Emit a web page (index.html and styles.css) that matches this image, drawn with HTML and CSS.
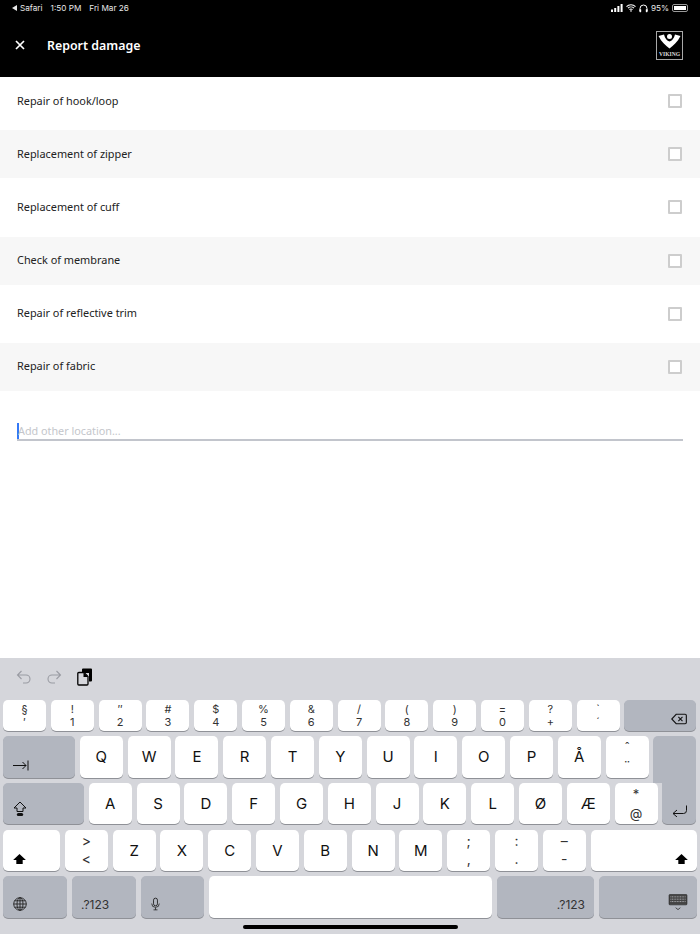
FILE: index.html
```html
<!DOCTYPE html>
<html lang="en">
<head>
    <meta charset="UTF-8">
    <meta name="viewport" content="width=device-width, initial-scale=1">
    <title>Report damage</title>
    <link rel="stylesheet" href="styles.css">
</head>
<body>
    <header class="app-header">
        <div class="status-bar">
            <div class="status-left">
                <span class="back-arrow"></span><span>Safari</span><span class="status-time">1:50 PM</span><span class="status-date">Fri Mar 26</span>
            </div>
            <div class="status-right">
                <svg class="ic-signal" width="12" height="8" viewBox="0 0 12 8"><path d="M0 5.500h2V8H0zM3.200 4h2v4h-2zM6.400 2h2v6h-2zM9.600 0h2v8h-2z" fill="#fff"/></svg>
                <svg width="10" height="8" viewBox="0 0 10 8"><path d="M.5 2.600a6.400 6.400 0 0 1 9 0M2 4.200a4.300 4.300 0 0 1 6 0M3.500 5.700a2.200 2.200 0 0 1 3 0" fill="none" stroke="#fff" stroke-width="1.100"/><path d="M5 8 3.900 6.800a1.600 1.600 0 0 1 2.200 0z" fill="#fff"/></svg>
                <svg width="9" height="9" viewBox="0 0 9 9"><path d="M1 7V4.500a3.500 3.500 0 0 1 7 0V7" fill="none" stroke="#fff" stroke-width="1"/><rect x=".4" y="5.200" width="1.800" height="3" rx=".6" fill="#fff"/><rect x="6.800" y="5.200" width="1.800" height="3" rx=".6" fill="#fff"/></svg>
                <span class="status-pct">95%</span>
                <span class="battery"><span class="battery-fill"></span></span>
            </div>
        </div>
        <div class="nav-bar">
            <svg class="close-icon" width="10" height="10" viewBox="0 0 10 10"><path d="M1 1l8 8M9 1l-8 8" stroke="#fff" stroke-width="1.700" fill="none"/></svg>
            <h1 class="nav-title">Report damage</h1>
            <svg class="logo" width="27" height="29" viewBox="0 0 27 29">
                <rect x=".5" y=".5" width="26" height="28" fill="#000" stroke="#a8a8a8"/>
                <path d="M2.500 5 8 3.500C9 7.500 11 10 13.500 10.500 16 10 18 7.500 19 3.500L24.500 5C21.500 11 17 15 13.500 17.500 10 15 5.500 11 2.500 5z" fill="#fff"/>
                <circle cx="13.500" cy="5.500" r="2.500" fill="#fff"/>
                <text x="13.500" y="24.500" class="logo-text" text-anchor="middle">VIKING</text>
            </svg>
        </div>
    </header>

    <main class="content">
        <div class="check-row"><span>Repair of hook/loop</span><span class="checkbox"></span></div>
        <div class="check-row alt"><span>Replacement of zipper</span><span class="checkbox"></span></div>
        <div class="check-row"><span>Replacement of cuff</span><span class="checkbox"></span></div>
        <div class="check-row alt"><span>Check of membrane</span><span class="checkbox"></span></div>
        <div class="check-row"><span>Repair of reflective trim</span><span class="checkbox"></span></div>
        <div class="check-row alt"><span>Repair of fabric</span><span class="checkbox"></span></div>
        <div class="other-field"><span class="caret"></span><span class="placeholder">Add other location...</span></div>
    </main>

    <section class="keyboard">
        <div class="kb-tools">
            <svg width="16" height="14" viewBox="0 0 16 14"><path d="M5.500 1 1.500 5l4 4M1.500 5H10a4 4 0 0 1 0 8H7" fill="none" stroke="#9a9ca3" stroke-width="1.100"/></svg>
            <svg width="16" height="14" viewBox="0 0 16 14"><path d="M10.500 1l4 4-4 4M14.500 5H6a4 4 0 0 0 0 8h3" fill="none" stroke="#9a9ca3" stroke-width="1.100"/></svg>
            <svg class="paste-icon" width="16" height="18" viewBox="0 0 16 18"><path d="M5 1.500A1 1 0 0 1 6 .5h8a1 1 0 0 1 1 1v11a1 1 0 0 1-1 1H12V5H5z" fill="#000"/><path d="M1.800 4.500H7l4 4v7.500a1 1 0 0 1-1 1H1.800a1 1 0 0 1-1-1v-10.500a1 1 0 0 1 1-1z" fill="#d5d6db" stroke="#000" stroke-width="1.300"/><path d="M6.500 4.500v4.500H11z" fill="#000"/></svg>
        </div>
        <div class="kb-row row-num">
            <div class="key dbl"><span>§</span><span>′</span></div>
            <div class="key dbl"><span>!</span><span>1</span></div>
            <div class="key dbl"><span>″</span><span>2</span></div>
            <div class="key dbl"><span>#</span><span>3</span></div>
            <div class="key dbl"><span>$</span><span>4</span></div>
            <div class="key dbl"><span>%</span><span>5</span></div>
            <div class="key dbl"><span>&amp;</span><span>6</span></div>
            <div class="key dbl"><span>/</span><span>7</span></div>
            <div class="key dbl"><span>(</span><span>8</span></div>
            <div class="key dbl"><span>)</span><span>9</span></div>
            <div class="key dbl"><span>=</span><span>0</span></div>
            <div class="key dbl"><span>?</span><span>+</span></div>
            <div class="key dbl"><span>`</span><span>´</span></div>
            <div class="key dark w-back end icon-mid">
                <svg width="16" height="12" viewBox="0 0 17 12"><path d="M5.500 1H15a1.300 1.300 0 0 1 1.300 1.300v7.400A1.300 1.300 0 0 1 15 11H5.500L.8 6z" fill="none" stroke="#111" stroke-width="1.200"/><path d="M7.800 3.800l4.400 4.400M12.200 3.800 7.800 8.200" stroke="#111" stroke-width="1.200"/></svg>
            </div>
        </div>
        <div class="kb-row">
            <div class="key dark w-tab start">
                <svg width="16" height="11" viewBox="0 0 16 11"><path d="M0 5.500h13M9.500 2l3.500 3.500L9.500 9M15 .5v10" fill="none" stroke="#111" stroke-width="1"/></svg>
            </div>
            <div class="key">Q</div><div class="key">W</div><div class="key">E</div><div class="key">R</div>
            <div class="key">T</div><div class="key">Y</div><div class="key">U</div><div class="key">I</div>
            <div class="key">O</div><div class="key">P</div><div class="key">Å</div>
            <div class="key dbl tall"><span>ˆ</span><span>¨</span></div>
            <div class="key dark return-top"></div>
        </div>
        <div class="kb-row">
            <div class="key dark w-caps start">
                <svg width="14" height="16" viewBox="0 0 14 16"><path d="M7 1 1 7h3v3.500h6V7h3z" fill="none" stroke="#111" stroke-width="1"/><rect x="3.800" y="12" width="6.400" height="3" rx="1.500" fill="#111"/></svg>
            </div>
            <div class="key">A</div><div class="key">S</div><div class="key">D</div><div class="key">F</div>
            <div class="key">G</div><div class="key">H</div><div class="key">J</div><div class="key">K</div>
            <div class="key">L</div><div class="key">Ø</div><div class="key">Æ</div>
            <div class="key dbl tall"><span>*</span><span>@</span></div>
            <div class="key dark return-bottom end">
                <svg width="15" height="12" viewBox="0 0 15 12"><path d="M14.500 .5v5a3 3 0 0 1-3 3H1M5 5 1 8.500 5 12" fill="none" stroke="#111" stroke-width="1"/></svg>
            </div>
        </div>
        <div class="kb-row">
            <div class="key w-shift start">
                <svg width="13" height="10" viewBox="0 0 14 11"><path d="M7 0 0 6.500h3.500V11h7V6.500H14z" fill="#000"/></svg>
            </div>
            <div class="key dbl wide-dbl"><span>&gt;</span><span>&lt;</span></div>
            <div class="key">Z</div><div class="key">X</div><div class="key">C</div><div class="key">V</div>
            <div class="key">B</div><div class="key">N</div><div class="key">M</div>
            <div class="key dbl wide-dbl"><span>;</span><span>,</span></div>
            <div class="key dbl wide-dbl"><span>:</span><span>.</span></div>
            <div class="key dbl wide-dbl"><span>–</span><span>-</span></div>
            <div class="key w-shift-r end">
                <svg width="13" height="10" viewBox="0 0 14 11"><path d="M7 0 0 6.500h3.500V11h7V6.500H14z" fill="#000"/></svg>
            </div>
        </div>
        <div class="kb-row row-bottom">
            <div class="key dark w-globe start">
                <svg width="14" height="14" viewBox="0 0 14 14"><g fill="none" stroke="#222" stroke-width=".9"><circle cx="7" cy="7" r="6.300"/><ellipse cx="7" cy="7" rx="3" ry="6.300"/><path d="M7 .7v12.600M.7 7h12.600M1.500 3.800h11M1.500 10.200h11"/></g></svg>
            </div>
            <div class="key dark w-123 start label">.?123</div>
            <div class="key dark w-mic start">
                <svg width="9" height="14" viewBox="0 0 10 14"><rect x="2.800" y=".5" width="4.400" height="8.500" rx="2.200" fill="none" stroke="#222" stroke-width="1"/><path d="M.8 6.500a4.200 4.200 0 0 0 8.400 0M5 11v2.500M2.800 13.500h4.400" fill="none" stroke="#222" stroke-width=".9"/></svg>
            </div>
            <div class="key w-space"></div>
            <div class="key dark w-123r end label">.?123</div>
            <div class="key dark w-hide end">
                <svg width="20" height="17" viewBox="0 0 20 18"><rect x=".5" y=".5" width="19" height="11" rx="1" fill="#444" stroke="#222" stroke-width=".6"/><path d="M2 3h16M2 5.500h16M2 8h16" stroke="#c8cad0" stroke-width=".8" stroke-dasharray="1 .7"/><path d="M7.500 14.500 10 16.500l2.500-2" fill="none" stroke="#222" stroke-width=".8"/></svg>
            </div>
        </div>
        <div class="home-bar"></div>
    </section>
</body>
</html>
```

FILE: styles.css
```css
* {
    box-sizing: border-box;
}
body {
    margin: 0;
    height: 934px;
    overflow: hidden;
    font-family: 'Noto Sans', 'Open Sans', sans-serif;
    background: #fff;
    color: #222;
    display: flex;
    flex-direction: column;
}

/* header */
.app-header {
    background: #000;
    color: #fff;
    height: 77px;
    flex: none;
}
.status-bar {
    height: 16px;
    padding: 0 12px;
    display: flex;
    align-items: center;
    justify-content: space-between;
    font-family: Inter, 'Liberation Sans', sans-serif;
    font-size: 8.2px;
    color: #e8e8e8;
}
.status-left {
    display: flex;
    align-items: center;
    gap: 3px;
}
.back-arrow {
    width: 0;
    height: 0;
    border: 3px solid transparent;
    border-left: 0;
    border-right: 5px solid #e8e8e8;
}
.status-time,
.status-date {
    margin-left: 5px;
}
.status-right {
    display: flex;
    align-items: center;
    gap: 3px;
}
.battery {
    width: 16px;
    height: 8px;
    border: 1px solid #999;
    border-radius: 2px;
    padding: 1px;
    display: flex;
}
.battery-fill {
    flex: 1;
    background: #fff;
}
.nav-bar {
    height: 61px;
    padding: 0 17px 3px 15px;
    display: flex;
    align-items: center;
}
.close-icon {
    margin-right: 22px;
}
.nav-title {
    flex: 1;
    margin: 0;
    font-size: 12.4px;
    font-weight: 600;
}
.logo-text {
    font-family: 'Liberation Serif', serif;
    font-size: 5.6px;
    font-weight: bold;
    fill: #ddd;
}

/* list */
.content {
    flex: 1;
    display: flex;
    flex-direction: column;
    gap: 5.2px;
}
.check-row {
    height: 48px;
    padding: 0 18px 2px 17px;
    display: flex;
    align-items: center;
    justify-content: space-between;
    font-size: 10.9px;
    color: #222;
}
.check-row.alt {
    background: #f7f7f7;
}
.checkbox {
    width: 14px;
    height: 14px;
    margin-top: 2px;
    border: 2px solid #cdcdcd;
    border-radius: 1px;
    background: #fff;
}
.other-field {
    margin: 22px 17px 0;
    height: 23px;
    padding-bottom: 1px;
    border-bottom: 2px solid #c2c5cc;
    display: flex;
    align-items: flex-end;
    font-size: 10.8px;
    color: #c4c6cb;
}
.caret {
    width: 2px;
    height: 16px;
    margin-bottom: -1px;
    background: #3478f6;
    margin-right: -1px;
}

/* keyboard */
.keyboard {
    flex: none;
    height: 276px;
    background: #d5d6db;
    display: flex;
    flex-direction: column;
    font-family: Inter, 'Liberation Sans', sans-serif;
    color: #111;
}
.kb-tools {
    height: 42px;
    padding: 0 0 4px 16px;
    display: flex;
    align-items: center;
    gap: 14px;
}
.paste-icon {
    margin-left: 1px;
}
.kb-row {
    height: 41.5px;
    margin-bottom: 5.2px;
    padding: 0 3px;
    display: flex;
    gap: 4.8px;
}
.row-num {
    height: 31px;
}
.row-bottom {
    gap: 5px;
}
.key {
    width: 43px;
    flex: none;
    background: #fff;
    border-radius: 5px;
    box-shadow: 0 1px 0 #8f9197;
    display: flex;
    align-items: center;
    justify-content: center;
    font-size: 15px;
}
.key.dark {
    background: #b2b6bf;
}
.key.dbl {
    flex-direction: column;
    justify-content: center;
    font-size: 11px;
    line-height: 13px;
    color: #333;
}
.key.tall {
    font-size: 13px;
    line-height: 19px;
}
.key.wide-dbl {
    font-size: 14px;
    line-height: 18px;
}
.key.start {
    justify-content: flex-start;
    align-items: flex-end;
    padding: 0 0 7px 10px;
}
.key.end {
    justify-content: flex-end;
    align-items: flex-end;
    padding: 0 9px 7px 0;
}
.key.icon-mid {
    padding-bottom: 6px;
}
.w-back { width: 72px; }
.w-tab { width: 72px; }
.w-caps { width: 81px; }
.w-shift { width: 57px; }
.w-shift-r { width: 106px; }
.w-globe { width: 64px; }
.w-123 { width: 63.5px; }
.w-mic { width: 63.5px; }
.w-space { width: 283px; }
.w-123r { width: 97px; }
.w-hide { width: 98px; }
.key.label {
    font-size: 12px;
    color: #333;
    padding-left: 9px;
    padding-right: 9px;
    padding-bottom: 6px;
}
.return-top {
    z-index: 1;
    height: 46.7px;
    border-radius: 5px 5px 0 0;
    box-shadow: none;
}
.return-bottom {
    width: 34px;
    border-radius: 0 0 5px 5px;
}
.home-bar {
    width: 215px;
    height: 4px;
    margin: 2px auto 0;
    background: #000;
    border-radius: 2px;
}
```
